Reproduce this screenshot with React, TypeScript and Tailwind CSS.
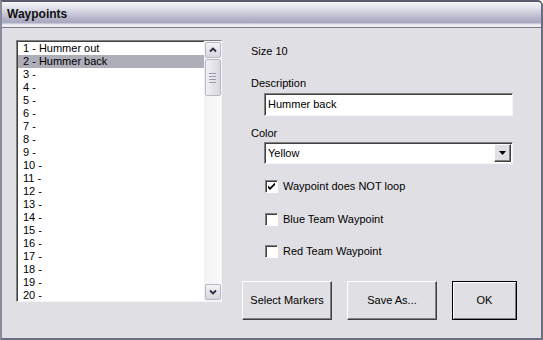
import React from "react";

const items = [
  "1 - Hummer out",
  "2 - Hummer back",
  ...Array.from({ length: 18 }, (_, i) => `${i + 3} -`),
];

function Check({ checked }: { checked?: boolean }) {
  return (
    <div className="w-[13px] h-[13px] bg-white border-t border-l border-[#808080] border-b border-r border-b-white border-r-white shadow-[inset_1px_1px_0_#404040] flex items-center justify-center">
      {checked && (
        <svg width="9" height="9" viewBox="0 0 9 9">
          <path d="M1 3.5 L3 5.5 L8 0.5 L8 3 L3 8 L1 6 Z" fill="#000" />
        </svg>
      )}
    </div>
  );
}

function ScrollBtn({ down }: { down?: boolean }) {
  return (
    <div className="w-[16px] h-[16px] rounded-[2px] border border-[#b8b8c8] bg-gradient-to-b from-[#f4f4f6] to-[#d6d6de] flex items-center justify-center">
      <svg width="8" height="6" viewBox="0 0 8 6">
        {down ? (
          <path d="M1 1.5 L4 4.5 L7 1.5" stroke="#2a2a40" strokeWidth="1.8" fill="none" />
        ) : (
          <path d="M1 4.5 L4 1.5 L7 4.5" stroke="#2a2a40" strokeWidth="1.8" fill="none" />
        )}
      </svg>
    </div>
  );
}

function Btn({ children, w, def }: { children: React.ReactNode; w: string; def?: boolean }) {
  return (
    <div
      className={`${w} h-[39px] flex items-center justify-center text-[11px] ${
        def
          ? "border border-black shadow-[inset_1px_1px_0_#ffffff,inset_-1px_-1px_0_#808080]"
          : "border border-t-white border-l-white border-b-[#404040] border-r-[#404040] shadow-[inset_-1px_-1px_0_#808080]"
      } bg-[#e0dfe3]`}
    >
      {children}
    </div>
  );
}

export default function App() {
  return (
    <div
      className="w-[543px] h-[340px] flex flex-col bg-[#e0dfe3] text-black overflow-hidden rounded-tr-[5px]"
      style={{ fontFamily: '"Liberation Sans", Arial, sans-serif' }}
    >
      {/* title bar */}
      <div className="h-[28px] flex items-center border-t-2 border-[#5a5a6e] border-r-2 border-r-[#6a6a80] border-l-2 border-l-[#8a8a9c] rounded-tr-[5px] bg-[linear-gradient(to_bottom,#f6f6fa_0%,#dcdce6_30%,#b0b0c6_70%,#a8a8c0_82%,#f4f4f8_92%,#e8e8ee_100%)] border-b border-b-[#7a7a8c]">
        <span className="pl-[5px] text-[12px] font-bold text-[#101010] leading-none mt-[-2px]">Waypoints</span>
      </div>
      {/* body */}
      <div className="flex-1 flex border-l-2 border-l-[#8a8a98] border-r-2 border-r-[#6e6e80] border-b-2 border-b-[#6e6e80] pl-[14px] pt-[12px]">
        {/* listbox */}
        <div className="w-[206px] h-[262px] flex bg-white border-t border-l border-[#808080] border-b border-r border-b-[#f4f4f4] border-r-[#f4f4f4] shadow-[inset_1px_1px_0_#404040]">
          <div className="flex-1 pt-[1px] pl-[1px] text-[11px] leading-[13px]">
            {items.map((t, i) => (
              <div key={i} className={`h-[13px] pl-[5px] ${i === 1 ? "bg-[#aeaeb8]" : ""}`}>
                {t}
              </div>
            ))}
          </div>
          <div className="w-[17px] flex flex-col items-center bg-gradient-to-r from-[#f2f2f2] to-[#fbfbfb] pt-[1px] pb-[1px]">
            <ScrollBtn />
            <div className="mt-[1px] w-[16px] h-[37px] rounded-[2px] border border-[#b8b8c8] bg-gradient-to-r from-[#f0f0f4] to-[#d8d8e0] flex flex-col items-center justify-center gap-[2px]">
              <div className="w-[7px] h-[1px] bg-[#9a9aac]" />
              <div className="w-[7px] h-[1px] bg-[#9a9aac]" />
              <div className="w-[7px] h-[1px] bg-[#9a9aac]" />
              <div className="w-[7px] h-[1px] bg-[#9a9aac]" />
            </div>
            <div className="flex-1" />
            <ScrollBtn down />
          </div>
        </div>
        {/* right column */}
        <div className="ml-[20px] flex flex-col text-[11px] leading-[13px]">
          <div className="mt-[5px] pl-[9px] h-[13px]">Size 10</div>
          <div className="mt-[19px] pl-[9px] h-[13px]">Description</div>
          <div className="mt-[3px] ml-[22px] w-[249px] h-[23px] bg-white border-t border-l border-[#808080] border-b border-r border-b-[#f4f4f4] border-r-[#f4f4f4] shadow-[inset_1px_1px_0_#404040] pl-[3px] pt-[4px] text-[11px] leading-[13px]">
            Hummer back
          </div>
          <div className="mt-[11px] pl-[9px] h-[13px]">Color</div>
          <div className="mt-[2px] ml-[22px] w-[249px] h-[22px] bg-white border-t border-l border-[#808080] border-b border-r border-b-[#f4f4f4] border-r-[#f4f4f4] shadow-[inset_1px_1px_0_#404040] flex items-center">
            <span className="flex-1 pl-[3px] text-[11px]">Yellow</span>
            <div className="w-[17px] h-[18px] mr-[1px] bg-[#e0dfe3] border border-t-white border-l-white border-b-[#404040] border-r-[#404040] shadow-[inset_-1px_-1px_0_#808080] flex items-center justify-center">
              <svg width="7" height="4" viewBox="0 0 7 4">
                <path d="M0 0 L7 0 L3.5 4 Z" fill="#000" />
              </svg>
            </div>
          </div>
          <div className="mt-[16px] ml-[23px] flex items-center gap-[5px] h-[13px]">
            <Check checked />
            <span className="text-[11px]">Waypoint does NOT loop</span>
          </div>
          <div className="mt-[20px] ml-[23px] flex items-center gap-[5px] h-[13px]">
            <Check />
            <span className="text-[11px]">Blue Team Waypoint</span>
          </div>
          <div className="mt-[19px] ml-[23px] flex items-center gap-[5px] h-[13px]">
            <Check />
            <span className="text-[11px]">Red Team Waypoint</span>
          </div>
          <div className="mt-[23px] flex gap-[15px]">
            <Btn w="w-[90px]">Select Markers</Btn>
            <Btn w="w-[90px]">Save As...</Btn>
            <Btn w="w-[65px]" def>
              OK
            </Btn>
          </div>
        </div>
      </div>
    </div>
  );
}
